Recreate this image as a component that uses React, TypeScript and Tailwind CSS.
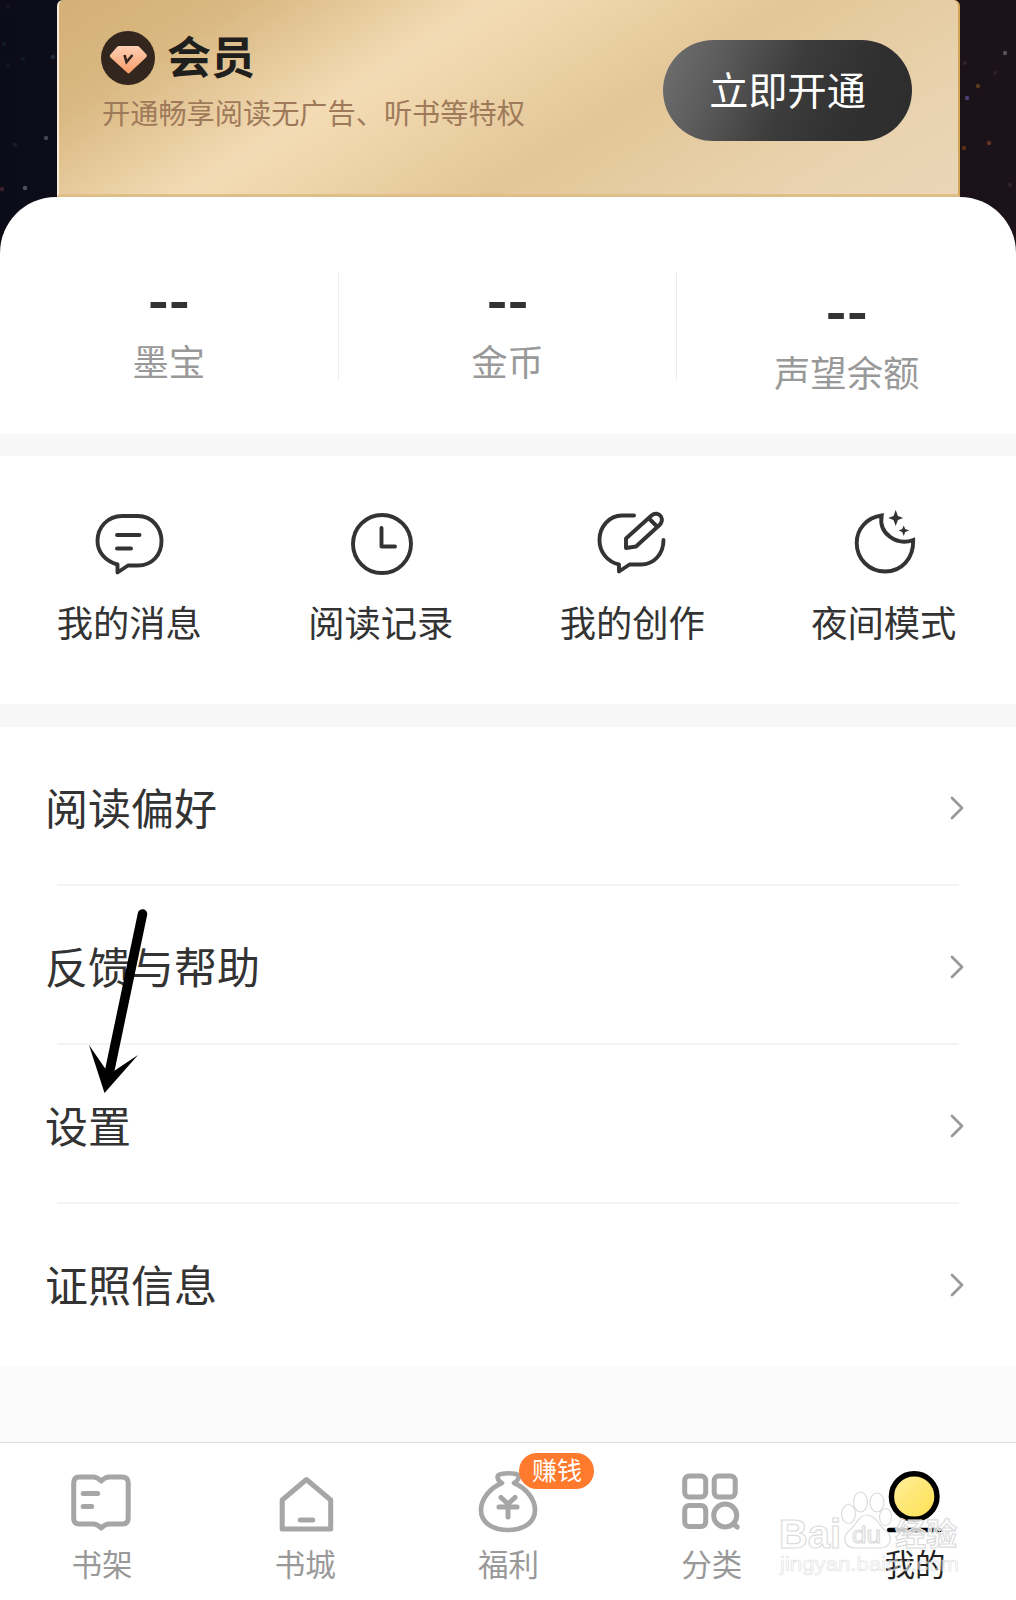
import React from "react";

const dark = "#333333";
const gray = "#a6a6a6";

function Stars({ points }: { points: [number, number, string][] }) {
  return (
    <svg className="h-full w-full" aria-hidden="true">
      {points.map(([x, y, c]) => (
        <circle key={`${x}-${y}`} cx={x} cy={y} r="2.2" fill={c} />
      ))}
    </svg>
  );
}

const leftStars: [number, number, string][] = [
  [53, 57, "#1d2c3c"], [46, 138, "#45454f"], [25, 188, "#50505a"], [2, 189, "#3a2028"],
  [8, 7, "#1e1420"], [4, 44, "#121c2c"], [15, 145, "#1a1c28"], [8, 65, "#181622"], [23, 59, "#101828"],
];
const rightStars: [number, number, string][] = [
  [45, 53, "#58505a"], [18, 86, "#5a3a1e"], [7, 98, "#4c4070"], [29, 143, "#643420"], [4, 148, "#5c3018"],
  [5, 63, "#2e2024"], [35, 73, "#2c2026"], [50, 185, "#2e2228"],
];

function VipBadge() {
  return (
    <svg width="54" height="54" viewBox="0 0 54 54">
      <defs>
        <linearGradient id="gem" x1="0" y1="0" x2="0" y2="1">
          <stop offset="0" stopColor="#ffd0b4" />
          <stop offset="1" stopColor="#f99b68" />
        </linearGradient>
      </defs>
      <circle cx="27" cy="27" r="27" fill="#33261f" />
      <path d="M18 15H36.500Q37.500 15 38.500 16L45.500 23.500Q46.500 25 45 26.500L29 41.500Q27.500 43.500 26 41.500L9.500 26.500Q8.500 25 9 24L16 16Q17 15 18 15Z" fill="url(#gem)" />
      <path d="M23.500 24L25.500 31L31.500 24" fill="none" stroke="#33261f" strokeWidth="2.600" />
    </svg>
  );
}

const svgProps = {
  fill: "none",
  stroke: dark,
  strokeWidth: 3.9,
  strokeLinecap: "round" as const,
  strokeLinejoin: "round" as const,
};

function MessageIcon() {
  return (
    <svg width="80" height="72" viewBox="89 508 80 72" {...svgProps}>
      <path d="M122 516H138C152 516 161.500 528 161.500 541C161.500 555 152 565.500 138 565.500H128L117.500 572.500V564.500C105 561 97.500 552 97.500 541C97.500 527 108 516 122 516Z" />
      <path d="M117 535H139.500M117 548.500H131" />
    </svg>
  );
}
function ClockIcon() {
  return (
    <svg width="80" height="72" viewBox="340 508 80 72" {...svgProps}>
      <circle cx="382" cy="544" r="29" />
      <path d="M381.500 528V546.500H395" />
    </svg>
  );
}
function CreateIcon() {
  return (
    <svg width="80" height="72" viewBox="592 508 80 72" {...svgProps}>
      <path d="M634 515.500H622C609 515.500 599.500 527 599.500 540C599.500 552 607 561.500 619 564.500V571.500L629.500 564.500H641C654 564.500 663.500 554 663.500 540" />
      <path d="M626 538.500L651.500 515.500C655 512.500 659 513.500 661 516.500C662.500 519.500 662 522.500 659.500 525L636 546.500L626 548ZM649 518.500L657 526.500" />
    </svg>
  );
}
function MoonIcon() {
  return (
    <svg width="80" height="72" viewBox="842.800 508 80 72" {...svgProps}>
      <path d="M881.500 515.500C866.500 517.500 856.500 529 856.500 543C856.500 559 869 571.500 885 571.500C901 571.500 913.500 559 913 540C897 546 878 534 881.500 515.500Z" strokeLinejoin="miter" />
      <path d="M895.500 510L897.700 516L903 518L897.700 520L895.500 526L893.300 520L888 518L893.300 516ZM903.500 525.500L905 529L909 530.500L905 532L903.500 536L902 532L898.500 530.500L902 529Z" fill={dark} stroke="none" />
    </svg>
  );
}

const tabSvg = { fill: "none", stroke: gray, strokeWidth: 5, strokeLinecap: "round" as const, strokeLinejoin: "round" as const };

function ShelfIcon() {
  return (
    <svg width="72" height="72" viewBox="65.800 1467 72 72" {...tabSvg}>
      <path d="M79 1477H93C97 1477 99 1479 101 1481C103 1479 105 1477 109 1477H122C126 1477 128 1479 128 1483V1518C128 1522 126 1524 122 1524H109C105 1524 103 1526 101 1528C99 1526 97 1524 93 1524H79C75.500 1524 73.500 1522 73.500 1518V1483C73.500 1479 75.500 1477 79 1477Z" />
      <path d="M83 1493.500H97.500M83 1506.500H91.500" />
    </svg>
  );
}
function HouseIcon() {
  return (
    <svg width="72" height="72" viewBox="269.300 1467 72 72" {...tabSvg}>
      <path d="M306.700 1479.500L331 1500V1529H282.500V1500Z" />
      <path d="M300.500 1520H313" />
    </svg>
  );
}
function BagIcon() {
  return (
    <svg width="72" height="72" viewBox="472 1467 72 72" {...tabSvg}>
      <path d="M502 1483C498 1481 495 1475 501 1474Q509 1472.500 516 1474C521 1476 518 1481 514 1483C526 1488 535 1499 535 1510C535 1523 523 1530 508 1530C493 1530 481 1523 481 1510C481 1499 490 1488 502 1483Z" strokeWidth="4.700" />
      <path d="M501 1497.500L508 1504L515 1497.500M499 1507H517M508 1505V1517" />
    </svg>
  );
}
function CategoryIcon() {
  return (
    <svg width="72" height="72" viewBox="675.300 1467 72 72" {...tabSvg}>
      <rect x="685" y="1476" width="21" height="21" rx="4.500" />
      <rect x="714.500" y="1476" width="21" height="21" rx="4.500" />
      <rect x="685" y="1505.500" width="21" height="21" rx="4.500" />
      <circle cx="725.500" cy="1515.500" r="11.500" />
      <path d="M734 1524L737.500 1527" />
    </svg>
  );
}
function MineIcon() {
  return (
    <svg width="72" height="72" viewBox="878.300 1467 72 72">
      <defs>
        <linearGradient id="sun" x1="0" y1="0" x2="1" y2="1">
          <stop offset="0" stopColor="#fff0a0" />
          <stop offset="1" stopColor="#ffdf4d" />
        </linearGradient>
      </defs>
      <circle cx="914.500" cy="1496.500" r="22.800" fill="url(#sun)" stroke="#000" strokeWidth="5.400" />
      <path d="M889.500 1530H940" stroke="#000" strokeWidth="4.600" strokeLinecap="round" />
    </svg>
  );
}

const stats = [
  { label: "墨宝", low: false },
  { label: "金币", low: false },
  { label: "声望余额", low: true },
];
const shortcuts = [
  { label: "我的消息", Icon: MessageIcon },
  { label: "阅读记录", Icon: ClockIcon },
  { label: "我的创作", Icon: CreateIcon },
  { label: "夜间模式", Icon: MoonIcon },
];
const rows = ["阅读偏好", "反馈与帮助", "设置", "证照信息"];
const tabs = [
  { label: "书架", Icon: ShelfIcon },
  { label: "书城", Icon: HouseIcon },
  { label: "福利", Icon: BagIcon, badge: "赚钱" },
  { label: "分类", Icon: CategoryIcon },
  { label: "我的", Icon: MineIcon, active: true },
];

function Watermark() {
  return (
    <svg className="absolute right-0 bottom-0" width="266" height="170" viewBox="750 1430 266 170" aria-hidden="true">
      <g fill="#fff" fillOpacity="0.7" stroke="#dcdcdc" strokeWidth="1.200" fontFamily="'Liberation Sans', sans-serif">
        <ellipse cx="848.500" cy="1514" rx="7" ry="9.500" />
        <ellipse cx="860.500" cy="1502" rx="7" ry="10" />
        <ellipse cx="877" cy="1502.500" rx="7" ry="9.500" />
        <ellipse cx="885.500" cy="1517" rx="6" ry="8.500" />
        <path d="M867 1515C876 1515 879 1526 886 1531C894 1538 890 1548 880 1548H855C844 1548 842 1537 849 1531C856 1526 858 1515 867 1515Z" />
        <text x="779" y="1547.500" fontSize="41" fontWeight="700" textLength="62" lengthAdjust="spacingAndGlyphs">Bai</text>
        <text x="852" y="1543" fontSize="24" fontWeight="400" textLength="29" lengthAdjust="spacingAndGlyphs">du</text>
        <text x="895" y="1545" fontSize="31" fontWeight="700" textLength="62" fillOpacity="0.8" fontFamily="'Noto Sans CJK SC', sans-serif">经验</text>
        <text x="780" y="1571" fontSize="21" strokeWidth="0.700" strokeOpacity="0.8" fillOpacity="0.4" textLength="179" lengthAdjust="spacingAndGlyphs">jingyan.baidu.com</text>
      </g>
    </svg>
  );
}

export default function App() {
  return (
    <div className="relative flex h-[1600px] w-[1016px] flex-col overflow-hidden bg-[#0c0c18] font-['Noto_Sans_CJK_SC',sans-serif] text-[#333333]">
      <header className="flex h-[197px] shrink-0 bg-linear-to-r from-[#0b0c18] to-[#1c1219]">
        <div className="w-[57px]"><Stars points={leftStars} /></div>
        <div className="flex w-[903px] items-start justify-between rounded-t-md border-r-2 border-b-[3px] border-l-2 border-r-[#d2a455] border-b-[#dfbe88] border-l-[#f8ecd8] bg-[linear-gradient(148deg,#d3b077_0%,#d9b881_15%,#f3dbb5_36%,#efd6ac_43%,#e3c697_61%,#e6cda4_74%,#e9d3b0_86%,#ead6b6_100%)] pr-[46px] pl-[42px]">
          <div>
            <div className="mt-[31px] flex h-[54px] items-center gap-[12px]">
              <VipBadge />
              <span className="mt-[-6px] text-[44px] leading-[54px] font-bold text-[#1f201d]">会员</span>
            </div>
            <p className="mt-[7px] pl-px text-[28.200px] leading-[40px] whitespace-nowrap text-[#9f7a5a]">开通畅享阅读无广告、听书等特权</p>
          </div>
          <button className="mt-[40px] h-[101px] w-[249px] rounded-full bg-[linear-gradient(112deg,#707070_0%,#5c5c5c_22%,#3c3c3c_50%,#303030_75%,#2d2d2d_100%)] pb-[4px] text-[39.200px] leading-none font-normal whitespace-nowrap text-white">立即开通</button>
        </div>
        <div className="w-[56px]"><Stars points={rightStars} /></div>
      </header>

      <div className="h-[237px] shrink-0 bg-linear-to-r from-[#0b0c18] to-[#1c1219]">
        <section className="grid h-full grid-cols-3 rounded-t-[56px] bg-white pt-[76px]">
          {stats.map((s, i) => (
            <div key={s.label} className={`flex h-[108px] flex-col items-center ${i < 2 ? "border-r border-[#ececec]" : ""} ${s.low ? "pt-[11px]" : ""}`}>
              <span className="h-[46px] text-[57px] leading-[46px] font-bold">--</span>
              <span className="mt-[21px] text-[36.300px] leading-[40px] text-[#999999]">{s.label}</span>
            </div>
          ))}
        </section>
      </div>

      <div className="h-[22px] shrink-0 bg-[#f7f7f7]" />

      <nav className="grid h-[248px] shrink-0 grid-cols-4 bg-white pt-[52px] pr-[7px] pl-[3px]">
        {shortcuts.map(({ label, Icon }) => (
          <div key={label} className="flex flex-col items-center">
            <Icon />
            <span className="mt-[21px] pl-px text-[36.300px] leading-[40px] whitespace-nowrap">{label}</span>
          </div>
        ))}
      </nav>

      <div className="h-[23px] shrink-0 bg-[#f7f7f7]" />

      <main className="relative h-[638px] shrink-0 bg-white">
        {rows.map((r, i) => (
          <div key={r}>
            <div className="flex h-[157px] items-center justify-between pt-[4px] pr-[50px] pl-[45px]">
              <span className="mt-[-4px] text-[43px] leading-[50px]">{r}</span>
              <svg width="18" height="28" viewBox="0 0 18 28" fill="none" stroke="#999" strokeWidth="2.800" strokeLinecap="round" strokeLinejoin="round">
                <path d="M4 4L14 14L4 24" />
              </svg>
            </div>
            {i < 3 && <div className="mx-[57px] h-[2px] bg-[#f3f3f3]" />}
          </div>
        ))}
        <svg className="absolute top-[176px] left-[80px]" width="70" height="194" viewBox="80 903 70 194">
          <path d="M142.500 914L109 1074" stroke="#000" strokeWidth="9.500" strokeLinecap="round" />
          <path d="M104.500 1093L89 1045L105.500 1069L114 1071L138 1055Z" fill="#000" />
        </svg>
      </main>

      <div className="h-[77px] shrink-0 bg-[#fbfbfb]" />

      <footer className="grid h-[158px] shrink-0 grid-cols-5 border-t border-[#dedede] bg-white pt-[24px]">
        {tabs.map(({ label, Icon, badge, active }) => (
          <div key={label} className="relative flex flex-col items-center">
            <Icon />
            <span className={`mt-[8px] pl-px text-[30.500px] leading-[32px] ${active ? "text-[#222222]" : "text-[#999999]"}`}>{label}</span>
            {badge && (
              <span className="absolute top-[-14px] left-[113px] flex h-[36px] w-[75px] items-center justify-center rounded-full bg-[#ff7a2c] pb-[3px] text-[25px] leading-none text-white">{badge}</span>
            )}
          </div>
        ))}
      </footer>
      <Watermark />
    </div>
  );
}
